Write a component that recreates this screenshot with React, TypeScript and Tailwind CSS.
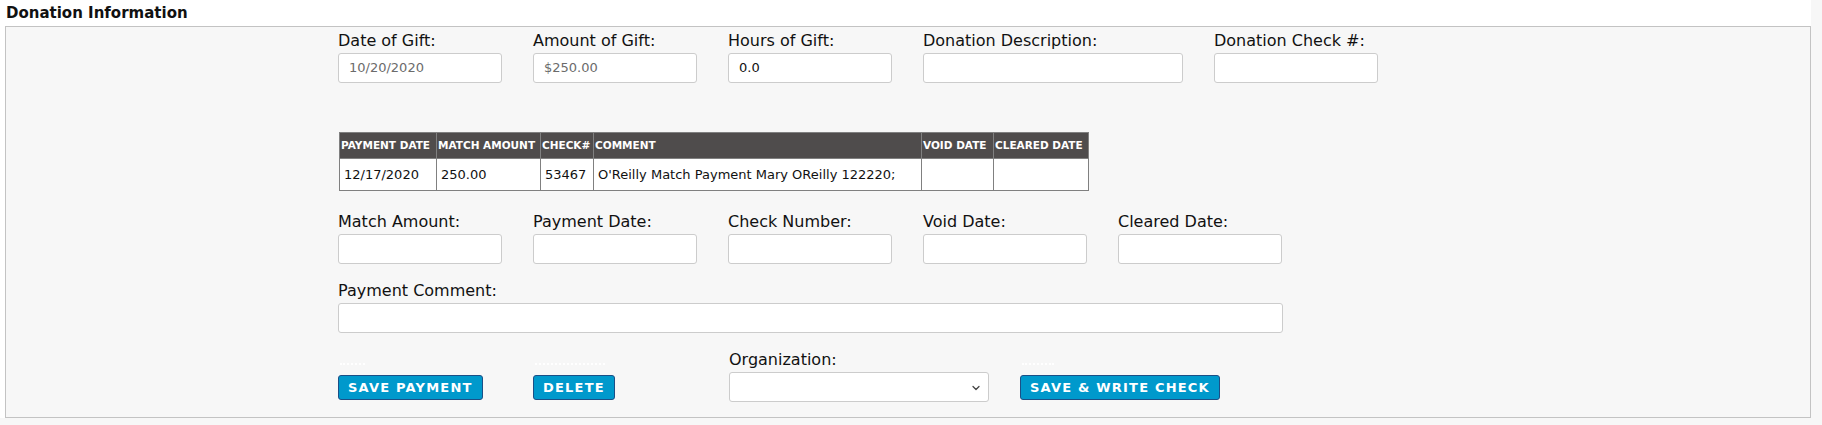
import { ChevronDown } from "lucide-react";

const font = "font-['DejaVu_Sans',Verdana,sans-serif]";

function Field({ label, value, width = "w-[164px]", muted }: { label: string; value?: string; width?: string; muted?: boolean }) {
  return (
    <div className={`flex flex-col ${width}`}>
      <label className="text-[16px] leading-[19px] text-[#111] mb-[3px]">{label}</label>
      <div className={`h-[30px] bg-white border border-[#cccccc] rounded-[3px] flex items-center px-[10px] text-[13px] ${muted ? "text-[#6b6b6b]" : "text-[#111]"}`}>
        {value}
      </div>
    </div>
  );
}

function Btn({ children, dots = "w-[25px]" }: { children: React.ReactNode; dots?: string }) {
  return (
    <div className="flex flex-col items-start">
      <div className={`h-[2px] mb-[10px] ml-[2px] ${dots} border-t-2 border-dotted border-white`}></div>
      <button className="h-[25px] px-[9px] bg-[#0099cc] border border-[#1c4f86] rounded-[3px] text-white text-[13px] font-bold tracking-[1.2px] uppercase leading-none whitespace-nowrap">
        {children}
      </button>
    </div>
  );
}

export default function App() {
  const cols = [
    { h: "Payment Date", v: "12/17/2020", w: "w-[97px]" },
    { h: "Match Amount", v: "250.00", w: "w-[104px]" },
    { h: "Check#", v: "53467", w: "w-[53px]" },
    { h: "Comment", v: "O'Reilly Match Payment Mary OReilly 122220;", w: "w-[328px]" },
    { h: "Void Date", v: "", w: "w-[72px]" },
    { h: "Cleared Date", v: "", w: "w-[95px]" },
  ];

  return (
    <div className={`min-h-screen bg-[#f7f7f7] ${font}`}>
      <div className="w-[1811px] bg-white pl-[5px]">
        <h2 className="text-[15px] font-bold text-[#111] leading-[26px] pl-[1px]">Donation Information</h2>

        <div className="h-[392px] bg-[#f7f7f7] border border-[#c3c3c3] pl-[332px] pt-[4px]">
          <div className="flex gap-[31px]">
            <Field label="Date of Gift:" value="10/20/2020" muted />
            <Field label="Amount of Gift:" value="$250.00" muted />
            <Field label="Hours of Gift:" value="0.0" />
            <Field label="Donation Description:" width="w-[260px]" />
            <Field label="Donation Check #:" />
          </div>

          <table className="mt-[49px] ml-[1px] border-collapse border border-[#808080] text-[13px]">
            <thead>
              <tr className="bg-[#4f4c4c] text-white">
                {cols.map((c) => (
                  <th key={c.h} className={`${c.w} h-[26px] border border-[#808080] text-left font-bold uppercase text-[10.5px] px-[1px] whitespace-nowrap`}>
                    {c.h}
                  </th>
                ))}
              </tr>
            </thead>
            <tbody>
              <tr className="bg-white text-[#111]">
                {cols.map((c) => (
                  <td key={c.h} className="h-[32px] border border-[#808080] px-[4px] whitespace-nowrap">
                    {c.v}
                  </td>
                ))}
              </tr>
            </tbody>
          </table>

          <div className="flex gap-[31px] mt-[21px]">
            <Field label="Match Amount:" />
            <Field label="Payment Date:" />
            <Field label="Check Number:" />
            <Field label="Void Date:" />
            <Field label="Cleared Date:" />
          </div>

          <div className="mt-[17px]">
            <Field label="Payment Comment:" width="w-[945px]" />
          </div>

          <div className="flex items-end mt-[17px]">
            <div className="w-[195px] pb-[2px]">
              <Btn>Save Payment</Btn>
            </div>
            <div className="w-[196px] pb-[2px]">
              <Btn dots="w-[70px]">Delete</Btn>
            </div>
            <div className="flex flex-col w-[291px]">
              <label className="text-[16px] leading-[19px] text-[#111] mb-[3px]">Organization:</label>
              <div className="relative h-[30px] w-[260px] bg-white border border-[#cccccc] rounded-[3px]">
                <ChevronDown className="absolute right-[6px] top-[9px] w-[12px] h-[12px] text-[#444]" strokeWidth={2.5} />
              </div>
            </div>
            <div className="pb-[2px]">
              <Btn dots="w-[32px]">Save &amp; Write Check</Btn>
            </div>
          </div>
        </div>
      </div>
    </div>
  );
}
